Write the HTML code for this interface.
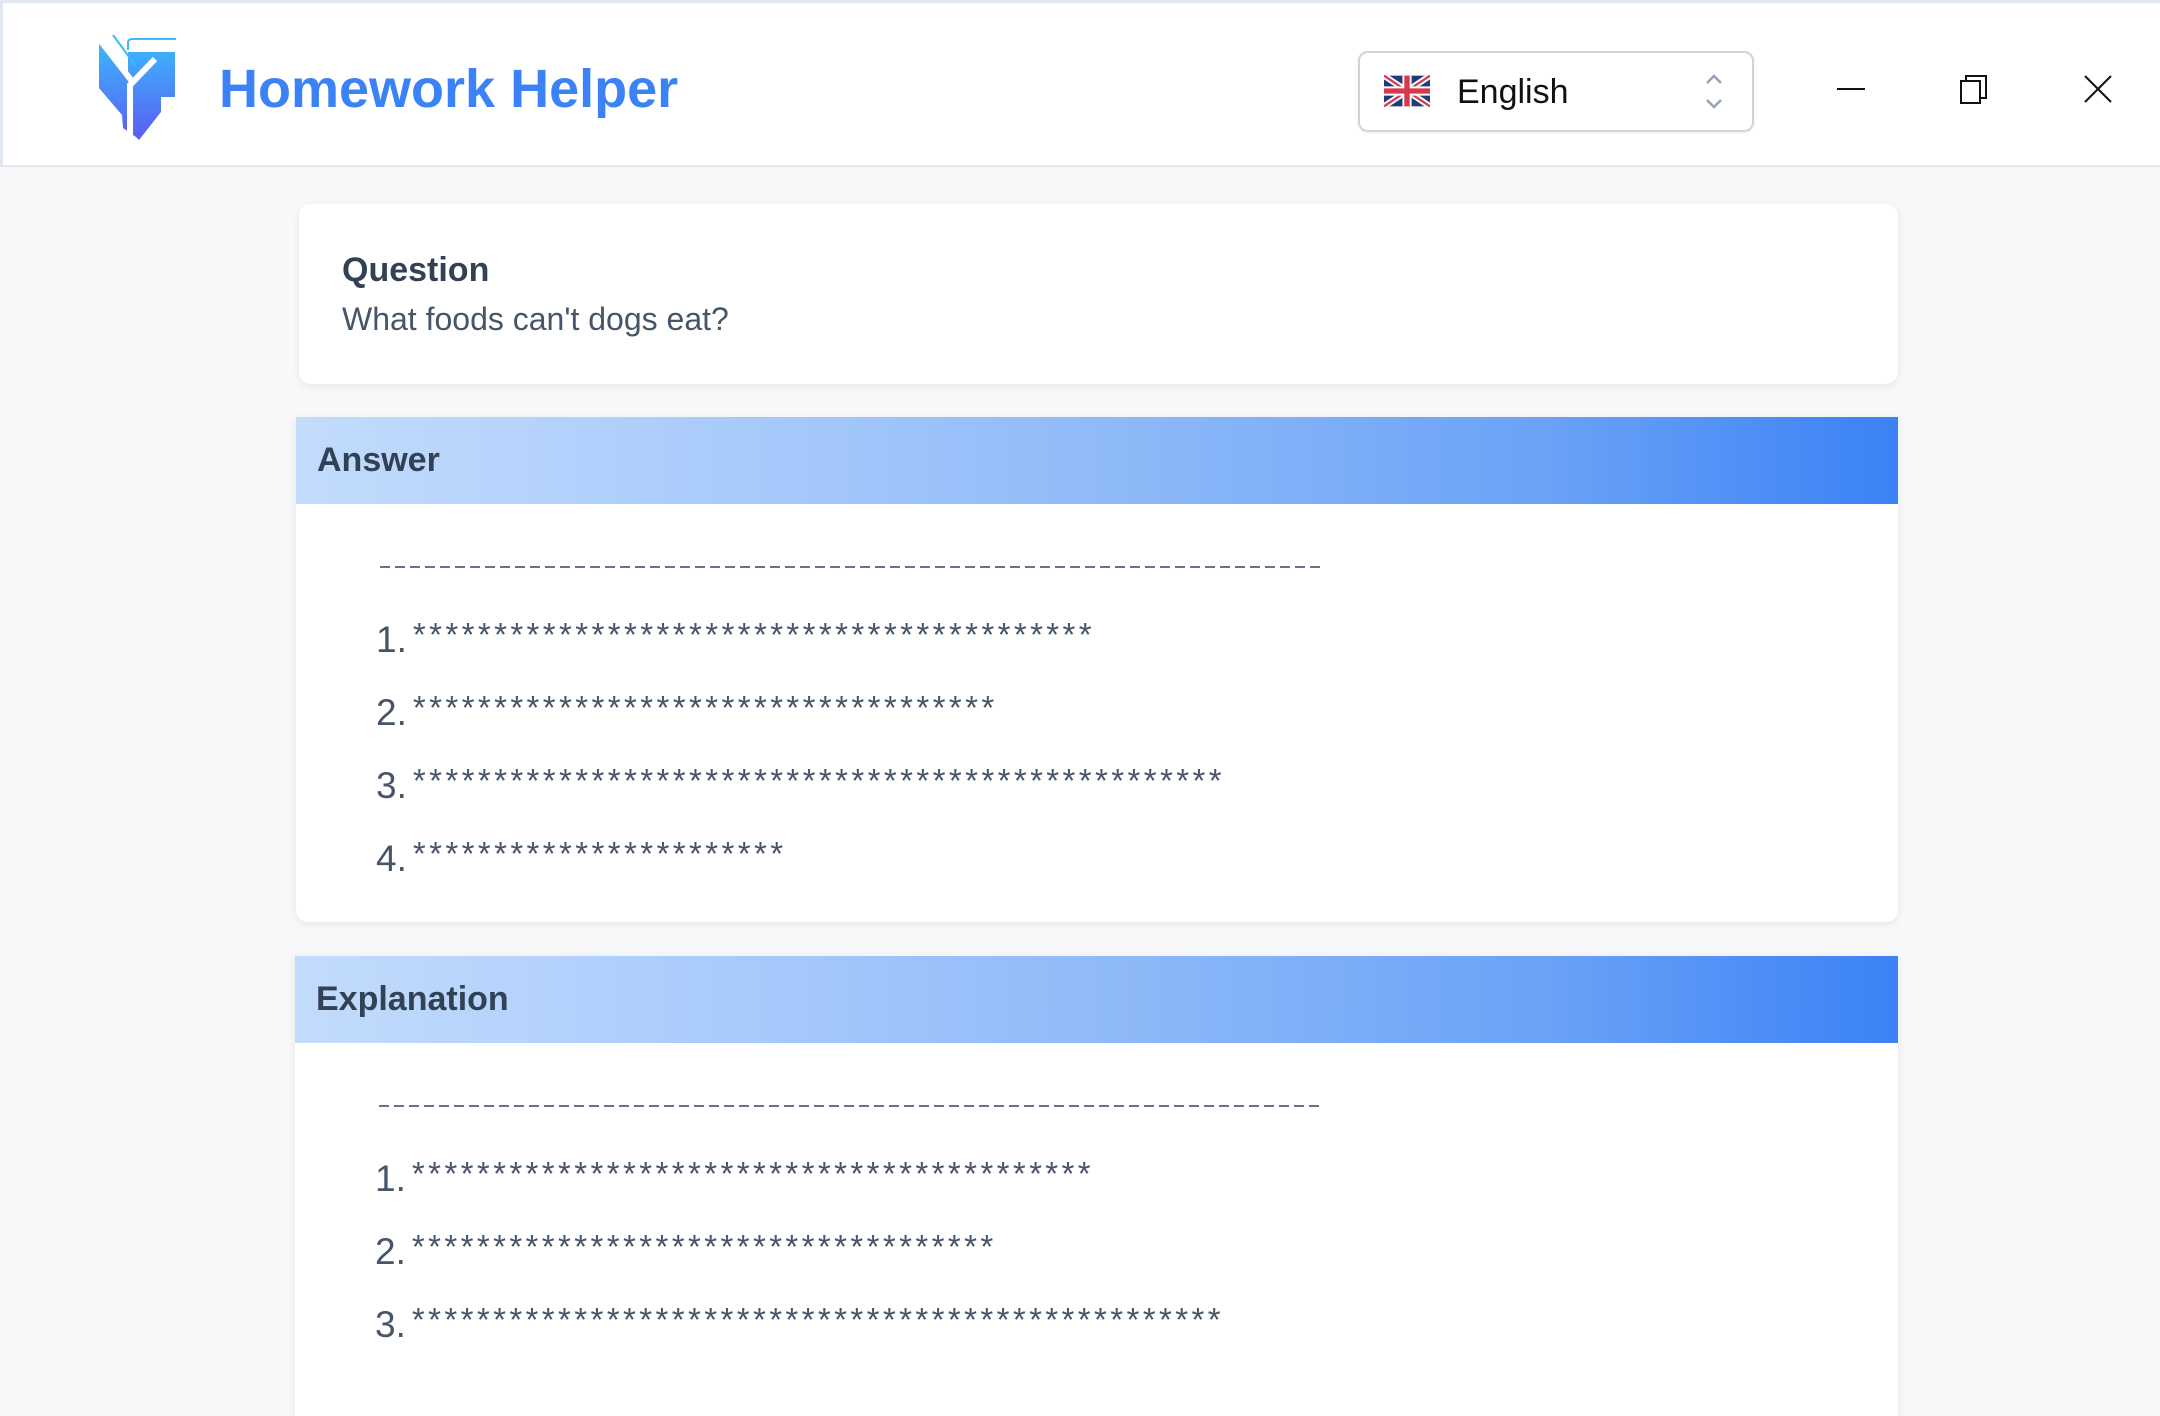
<!DOCTYPE html>
<html><head><meta charset="utf-8"><style>
*{margin:0;padding:0;box-sizing:border-box}
body{width:2160px;height:1381px;overflow:hidden;background:#f7f8fa;font-family:"Liberation Sans",sans-serif;position:relative}
.hdr{position:absolute;left:0;top:0;width:2160px;height:167px;background:#fff;border-top:3px solid #e2e8f0;border-left:3px solid #e2e8f0;border-bottom:2px solid #e5e7eb}
.title{position:absolute;left:216px;top:55px;font-size:54px;font-weight:bold;color:#3b82f6;white-space:nowrap}
.sel{position:absolute;left:1355px;top:48px;width:396px;height:81px;border:2px solid #d1d5db;border-radius:10px;background:#fff;box-shadow:0 1px 3px rgba(0,0,0,.08)}
.sel span{position:absolute;left:97px;top:20px;font-size:34px;color:#111}
.card{position:absolute;background:#fff;border-radius:12px;box-shadow:0 2px 8px rgba(0,0,0,.08);overflow:hidden}
.ch{height:87px;background:linear-gradient(90deg,#c3dcfc 0%,#a6c9fb 30%,#8ab6f8 55%,#6aa2f6 78%,#3b82f6 100%);padding-left:21px;font-size:34px;font-weight:bold;color:#334155;line-height:87px}
.dash{position:absolute;left:84px;width:944px;height:2px;background:repeating-linear-gradient(90deg,#64748b 0 10px,transparent 10px 15px)}
.it{position:absolute;left:80px;font-size:37px;color:#475569;white-space:nowrap;height:44px}
.it b{font-weight:normal}
.it i{font-style:normal;font-size:33px;letter-spacing:3.4px;position:relative;top:-6px;margin-left:6px}
</style></head><body>
<div class="hdr">
<svg style="position:absolute;left:0;top:0" width="200" height="165" viewBox="3 3 200 165">
<defs><linearGradient id="g" x1="0" y1="0" x2="0" y2="1"><stop offset="0" stop-color="#3cb8fb"/><stop offset="1" stop-color="#5b5cf5"/></linearGradient></defs>
<path d="M99,44 L104,42 L128,72 L128,52 L175,52 L175,97 L161,97 L161,112 L139,140 L136,137 L123,128 L122,115 L99,88 Z" fill="url(#g)"/>
<path d="M100,40 L131,80 M155,59 L130,85 L130,145" stroke="#fff" stroke-width="6" fill="none"/>
<path d="M113,35 L135,65 M176,39 L132,39 Q128,39 128,43 L128,50" stroke="#3cb8fb" stroke-width="2" fill="none"/>
</svg>
<div class="title">Homework Helper</div>
<div class="sel">
<svg style="position:absolute;left:24px;top:21px" width="46" height="34" viewBox="0 0 60 40">
<rect width="60" height="40" fill="#22397a"/>
<path d="M0,0 L60,40 M60,0 L0,40" stroke="#fff" stroke-width="8"/>
<path d="M0,0 L60,40 M60,0 L0,40" stroke="#d7384c" stroke-width="3"/>
<path d="M30,0 V40 M0,20 H60" stroke="#fff" stroke-width="12"/>
<path d="M30,0 V40 M0,20 H60" stroke="#d7384c" stroke-width="7"/>
</svg>
<span>English</span>
<svg style="position:absolute;left:343px;top:18px" width="22" height="42" viewBox="0 0 22 42"><path d="M4,12 L11,5 L18,12 M4,29 L11,36 L18,29" stroke="#94a3b8" stroke-width="2.5" fill="none"/></svg>
</div>
<svg style="position:absolute;left:1830px;top:68px" width="290" height="40" viewBox="1830 70 290 40">
<path d="M1834,88 H1862" stroke="#111" stroke-width="2"/>
<rect x="1958" y="80" width="19" height="22" fill="none" stroke="#111" stroke-width="2"/>
<path d="M1963,80 V75 H1983 V97 H1977" fill="none" stroke="#111" stroke-width="2"/>
<path d="M2082,75 L2108,101 M2108,75 L2082,101" stroke="#111" stroke-width="2"/>
</svg>
</div>

<div class="card" style="left:299px;top:204px;width:1599px;height:180px">
<div style="position:absolute;left:43px;top:47px;font-size:34px;font-weight:bold;color:#334155">Question</div>
<div style="position:absolute;left:43px;top:97px;font-size:32px;color:#475569">What foods can't dogs eat?</div>
</div>

<div class="card" style="left:296px;top:417px;width:1602px;height:505px;border-radius:0 0 12px 12px">
<div class="ch">Answer</div>
<div class="dash" style="top:149px"></div>
<div class="it" style="top:202px"><b>1.</b><i>******************************************</i></div>
<div class="it" style="top:275px"><b>2.</b><i>************************************</i></div>
<div class="it" style="top:348px"><b>3.</b><i>**************************************************</i></div>
<div class="it" style="top:421px"><b>4.</b><i>***********************</i></div>
</div>

<div class="card" style="left:295px;top:956px;width:1603px;height:460px;border-radius:0">
<div class="ch">Explanation</div>
<div class="dash" style="top:149px"></div>
<div class="it" style="top:202px"><b>1.</b><i>******************************************</i></div>
<div class="it" style="top:275px"><b>2.</b><i>************************************</i></div>
<div class="it" style="top:348px"><b>3.</b><i>**************************************************</i></div>
</div>
</body></html>
